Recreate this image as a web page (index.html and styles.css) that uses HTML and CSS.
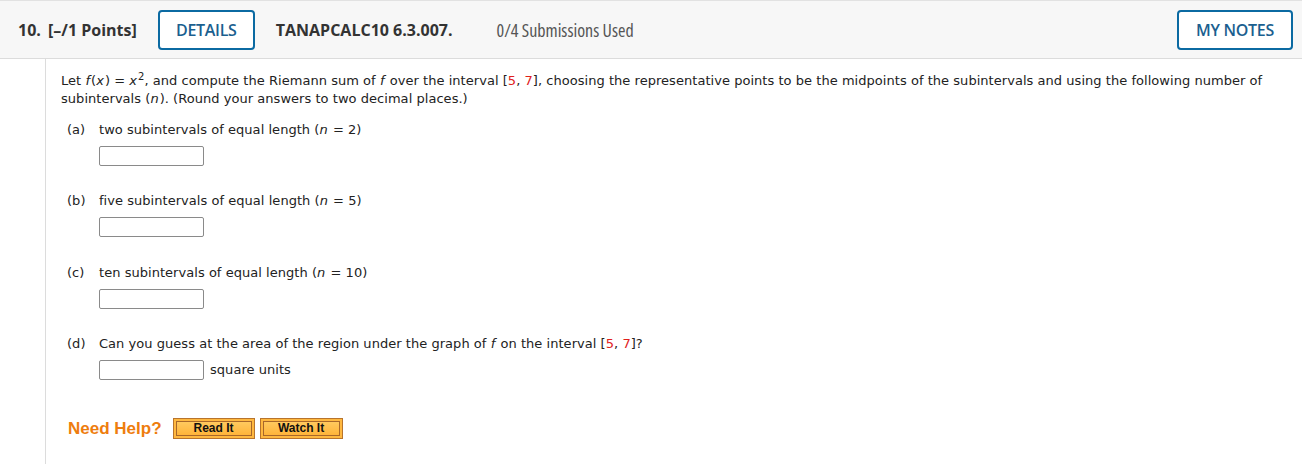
FILE: index.html
```html
<!DOCTYPE html>
<html lang="en">
<head>
<meta charset="utf-8">
<title>Question 10</title>
<link rel="stylesheet" href="styles.css">
</head>
<body>
<div class="question">
  <div class="qhead">
    <span class="qnum">10.</span>
    <span class="qpts">[–/1 Points]</span>
    <button class="obtn details">DETAILS</button>
    <span class="qcode">TANAPCALC10 6.3.007.</span>
    <span class="qsub">0/4 Submissions Used</span>
    <button class="obtn notes">MY NOTES</button>
  </div>
  <div class="qbody">
    <p class="prompt">Let <i>f</i>(<i>x</i>) = <i>x</i><sup>2</sup>, and compute the Riemann sum of <i>f</i> over the interval [<span class="red">5</span>, <span class="red">7</span>], choosing the representative points to be the midpoints of the subintervals and using the following number of subintervals (<i>n</i>). (Round your answers to two decimal places.)</p>

    <div class="part">
      <div class="pline"><span class="plabel">(a)</span><span>two subintervals of equal length (<i>n</i> = 2)</span></div>
      <div class="ansline"><input class="ans" type="text"></div>
    </div>
    <div class="part">
      <div class="pline"><span class="plabel">(b)</span><span>five subintervals of equal length (<i>n</i> = 5)</span></div>
      <div class="ansline"><input class="ans" type="text"></div>
    </div>
    <div class="part part-c">
      <div class="pline"><span class="plabel">(c)</span><span>ten subintervals of equal length (<i>n</i> = 10)</span></div>
      <div class="ansline"><input class="ans" type="text"></div>
    </div>
    <div class="part">
      <div class="pline"><span class="plabel">(d)</span><span>Can you guess at the area of the region under the graph of <i>f</i> on the interval [<span class="red">5</span>, <span class="red">7</span>]?</span></div>
      <div class="ansline"><input class="ans" type="text"><span class="unit">square units</span></div>
    </div>

    <div class="help">
      <span class="helptxt">Need Help?</span>
      <button class="hbtn read"><span class="hin">Read It</span></button>
      <button class="hbtn watch"><span class="hin">Watch It</span></button>
    </div>
  </div>
</div>
</body>
</html>
```
FILE: styles.css
```css
html, body {
  margin: 0;
  padding: 0;
  background: #fff;
}
body {
  width: 1302px;
  height: 464px;
  overflow: hidden;
}
.question {
  display: flex;
  flex-direction: column;
  height: 464px;
}
.qhead {
  display: flex;
  align-items: center;
  height: 57px;
  background: #f7f7f7;
  border-top: 1px solid #e2e2e2;
  border-bottom: 1px solid #dcdcdc;
  padding: 0 9px 0 18px;
  font-family: "Open Sans", sans-serif;
  font-size: 16px;
  color: #333;
}
.qnum {
  font-weight: 700;
  width: 30px;
}
.qpts {
  font-weight: 700;
  margin-right: 21px;
}
.obtn {
  height: 40px;
  box-sizing: border-box;
  border: 2px solid #0b6aa2;
  border-radius: 4px;
  background: #fff;
  color: #1b5f8f;
  font-family: "Open Sans", sans-serif;
  font-size: 16px;
  font-weight: 600;
  letter-spacing: -0.3px;
  padding: 0;
  margin: 0;
}
.details {
  width: 97px;
  margin-right: 21px;
}
.qcode {
  font-weight: 700;
  margin-right: 44px;
}
.qsub {
  color: #555;
  font-size: 18px;
  font-stretch: 75%;
}
.notes {
  width: 116px;
  margin-left: auto;
}
.qbody {
  flex: 1;
  margin-left: 45px;
  border-left: 1px solid #dcdcdc;
  padding: 13px 0 0 15px;
  font-family: "DejaVu Sans", Verdana, sans-serif;
  font-size: 13px;
  line-height: 18px;
  letter-spacing: 0.04px;
  color: #222;
}
.qbody i {
  padding-right: 1px;
}
.prompt {
  margin: 0;
  width: 1220px;
}
.prompt sup {
  font-size: 10px;
  line-height: 0;
}
.red {
  color: #e0201b;
}
.part {
  margin-top: 13px;
}
.part + .part {
  margin-top: 26px;
}
.part + .part-c {
  margin-top: 27px;
}
.pline {
  display: flex;
  padding-left: 6px;
}
.plabel {
  width: 32px;
}
.ansline {
  display: flex;
  align-items: center;
  margin-top: 7px;
  padding-left: 38px;
}
.ans {
  width: 105px;
  height: 20px;
  box-sizing: border-box;
  border: 1px solid #8a8a8a;
  border-radius: 2px;
  margin: 0;
  padding: 0;
}
.unit {
  margin-left: 6px;
}
.help {
  display: flex;
  align-items: center;
  margin-top: 38px;
  padding-left: 7px;
}
.helptxt {
  font-family: "Liberation Sans", Arial, sans-serif;
  font-weight: 700;
  font-size: 17px;
  letter-spacing: 0;
  color: #ee7d0e;
  margin-right: 11px;
}
.hbtn {
  height: 21px;
  box-sizing: border-box;
  border: 1px solid #b8742c;
  background: #ffb83f;
  padding: 2px;
  margin: 0 5px 0 0;
  display: flex;
}
.read { width: 82px; }
.watch { width: 83px; }
.hin {
  flex: 1;
  border: 1px solid #a8672a;
  background: linear-gradient(#ffc95e, #ffb43a);
  font-family: "Liberation Sans", Arial, sans-serif;
  font-weight: 700;
  font-size: 12px;
  line-height: 13px;
  letter-spacing: 0;
  color: #111;
  text-align: center;
}
```
